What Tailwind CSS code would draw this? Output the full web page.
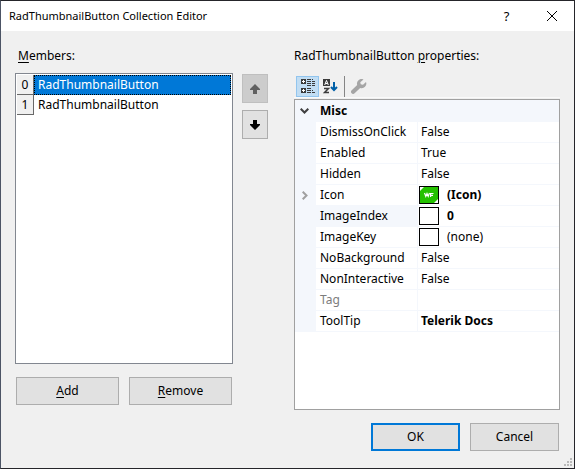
<!DOCTYPE html>
<html lang="en">
<head>
<meta charset="utf-8">
<meta name="viewport" content="width=device-width, initial-scale=1">
<title>RadThumbnailButton Collection Editor</title>
<script src="https://cdn.jsdelivr.net/npm/@tailwindcss/browser@4"></script>
</head>
<body class="bg-[#f0f0f0] text-black text-[12px] leading-4 font-['Noto_Sans','Open_Sans',sans-serif]">
<div class="relative flex flex-col min-h-screen border border-[#25252a] border-l-[#4c5465]">
  <header class="flex items-center h-[30px] bg-white pl-2">
    <h1 class="flex-1 text-[11px]">RadThumbnailButton Collection Editor</h1>
    <button type="button" aria-label="Help" class="flex items-center justify-center w-[45px] h-full text-[13px]">?</button>
    <button type="button" aria-label="Close" class="flex items-center justify-center w-[45px] h-full">
      <svg width="10" height="10" viewBox="0 0 10 10" fill="none" stroke="#000" stroke-width="1"><path d="M0 0L10 10M10 0L0 10"/></svg>
    </button>
  </header>

  <main class="flex-1 flex px-[14px] pt-[17px]">
    <section class="flex flex-col grow-[218] basis-0">
      <h2 id="members" class="pl-[3px] h-[25px]"><span class="underline underline-offset-2">M</span>embers:</h2>
      <ul role="listbox" aria-labelledby="members" class="flex-1 bg-white border border-[#828790] p-px">
        <li role="option" aria-selected="true" class="flex h-5">
          <span class="flex items-center justify-center w-[17px] h-5 bg-[#f0f0f0] border-r border-b border-[#696969]">0</span>
          <span class="flex-1 flex items-center pl-[3px] text-white bg-[#0078d7] border border-dotted border-black">RadThumbnailButton</span>
        </li>
        <li role="option" aria-selected="false" class="flex h-5">
          <span class="flex items-center justify-center w-[17px] h-5 bg-[#f0f0f0] border-r border-b border-[#696969]">1</span>
          <span class="flex-1 flex items-center pl-1">RadThumbnailButton</span>
        </li>
      </ul>
      <div class="grid grid-cols-2 gap-[10px] px-px pt-[13px] pb-[5px]">
        <button type="button" class="h-7 bg-[#e1e1e1] border border-[#adadad]"><span class="underline underline-offset-2">A</span>dd</button>
        <button type="button" class="h-7 bg-[#e1e1e1] border border-[#adadad]"><span class="underline underline-offset-2">R</span>emove</button>
      </div>
    </section>

    <div class="flex flex-col gap-[7px] w-[26px] shrink-0 ml-[9px] mr-[26px] pt-[26px]">
      <button type="button" disabled aria-label="Move up" class="flex items-center justify-center h-[29px] bg-[#cccccc] border border-[#bfbfbf]">
        <svg width="10" height="10" viewBox="0 0 10 10" fill="#606060"><path d="M5 0L10 5V6H7V10H3V6H0V5Z"/></svg>
      </button>
      <button type="button" aria-label="Move down" class="flex items-center justify-center h-[29px] bg-[#e1e1e1] border border-[#adadad]">
        <svg width="10" height="10" viewBox="0 0 10 10" fill="#000"><path d="M5 10L0 5V4H3V0H7V4H10V5Z"/></svg>
      </button>
    </div>

    <section class="flex flex-col grow-[266] basis-0">
      <h2 id="props" class="h-[27px]">RadThumbnailButton <span class="underline underline-offset-2">p</span>roperties:</h2>
      <div role="toolbar" aria-label="Property view" class="flex items-center h-[23px] pl-[2px] mb-px border-b border-[#fafafa]">
        <button type="button" aria-label="Categorized" aria-pressed="true" class="flex items-center justify-center w-[23px] h-[21px] bg-[#c1ddf3] border border-[#92c5ee]">
          <svg width="14" height="14" viewBox="0 0 14 14" shape-rendering="crispEdges">
            <path fill="#3b3b3b" d="M0 0h5v5H0zM0 9h5v5H0zM6 0h4v1H6zM11 0h1v1h-1zM6 2h4v1H6zM11 2h3v1h-3zM6 4h4v1H6zM11 4h3v1h-3zM6 6h4v1H6zM11 6h3v1h-3zM6 9h4v1H6zM6 11h4v1H6zM11 11h1v1h-1zM6 13h4v1H6zM11 13h3v1h-3z"/>
            <path fill="#fff" d="M2 1h1v1h1v1H3v1H2V3H1V2h1zM2 10h1v1h1v1H3v1H2v-1H1v-1h1z"/>
          </svg>
        </button>
        <button type="button" aria-label="Alphabetical" class="flex items-center justify-center w-[23px] h-[21px]">
          <svg width="15" height="15" viewBox="0 0 15 15">
            <path fill="#3b3b3b" d="M0 0h7v7H0z"/>
            <path fill="none" stroke="#fff" d="M1.7 6L3.5 1.4L5.3 6M2.3 4.5h2.4"/>
            <path fill="none" stroke="#3b3b3b" stroke-width="1.5" d="M1 9.5h4.5L1.5 13.5H6"/>
            <path fill="none" stroke="#0060a8" stroke-width="2" d="M11 3v8M8 8l3 3l3-3"/>
          </svg>
        </button>
        <span class="w-px h-[21px] ml-[2px] mr-[6px] bg-[#858585]"></span>
        <button type="button" disabled aria-label="Property pages" class="flex items-center justify-center w-4 h-[21px]">
          <svg width="16" height="15" viewBox="0 0 16 15" fill="#a5a5a5"><path d="M12.500 .4A4.600 4.600 0 0 0 6.200 6L.7 11.300A2 2 0 0 0 3.600 14.300L9.200 9A4.600 4.600 0 0 0 15 3L12 5.800L9.700 5.200L9.300 3.200Z"/></svg>
        </button>
      </div>

      <div class="flex-1 bg-white border border-[#a0a0a0]">
        <table aria-labelledby="props" class="w-full table-fixed border-separate border-spacing-0 text-left">
          <colgroup><col class="w-[21px]"><col class="w-[102px]"><col></colgroup>
          <tbody>
            <tr class="h-[22px] bg-[#f4f7fc]">
              <td class="p-0"><button type="button" aria-label="Collapse Misc" class="flex items-center justify-center w-[19px] h-[22px]"><svg width="9" height="6" viewBox="0 0 9 6" fill="none" stroke="#404040" stroke-width="2"><path d="M.7 .7L4.500 4.500L8.300 .7"/></svg></button></td>
              <th colspan="2" class="p-0 pl-1 font-bold">Misc</th>
            </tr>
            <tr class="h-[21px]"><td class="p-0 bg-[#f4f7fc]"></td><th class="p-0 pl-1 font-normal border-b border-r border-[#f4f7fc]">DismissOnClick</th><td class="p-0 pl-[3px] border-b border-[#f4f7fc]">False</td></tr>
            <tr class="h-[21px]"><td class="p-0 bg-[#f4f7fc]"></td><th class="p-0 pl-1 font-normal border-b border-r border-[#f4f7fc]">Enabled</th><td class="p-0 pl-[3px] border-b border-[#f4f7fc]">True</td></tr>
            <tr class="h-[21px]"><td class="p-0 bg-[#f4f7fc]"></td><th class="p-0 pl-1 font-normal border-b border-r border-[#f4f7fc]">Hidden</th><td class="p-0 pl-[3px] border-b border-[#f4f7fc]">False</td></tr>
            <tr class="h-[21px]">
              <td class="p-0 bg-[#f4f7fc]"><button type="button" aria-label="Expand Icon" class="flex items-center justify-center w-[19px] h-5"><svg width="6" height="9" viewBox="0 0 6 9" fill="none" stroke="#a0a0a0" stroke-width="2"><path d="M.7 .7L4.500 4.500L.7 8.300"/></svg></button></td>
              <th class="p-0 pl-1 font-normal border-b border-r border-[#f4f7fc]">Icon</th>
              <td class="p-0 pl-px border-b border-[#f4f7fc]"><div class="flex items-center gap-2 font-bold">
                <svg width="20" height="18" viewBox="0 0 20 18"><path fill="#000" d="M0 0h20v18H0z"/><path fill="#fff" d="M1 1h18v16H1z"/><path fill="#24c100" d="M5 1H19V13L15 17H1V5Z"/><path fill="none" stroke="#fff" stroke-width="1.200" d="M5.500 7L6.800 10.300L8 7.500L9.200 10.300L10.500 7M11.600 11V7.500H14.500M11.600 9.300H14"/></svg>(Icon)</div></td>
            </tr>
            <tr class="h-[21px]"><td class="p-0 bg-[#f4f7fc]"></td><th class="p-0 pl-1 font-normal border-b border-r border-[#f4f7fc] bg-[#f4f7fc]">ImageIndex</th><td class="p-0 pl-px border-b border-[#f4f7fc]"><div class="flex items-center gap-2 font-bold"><span class="w-5 h-[18px] border border-black"></span>0</div></td></tr>
            <tr class="h-[21px]"><td class="p-0 bg-[#f4f7fc]"></td><th class="p-0 pl-1 font-normal border-b border-r border-[#f4f7fc]">ImageKey</th><td class="p-0 pl-px border-b border-[#f4f7fc]"><div class="flex items-center gap-2"><span class="w-5 h-[18px] border border-black"></span>(none)</div></td></tr>
            <tr class="h-[21px]"><td class="p-0 bg-[#f4f7fc]"></td><th class="p-0 pl-1 font-normal border-b border-r border-[#f4f7fc]">NoBackground</th><td class="p-0 pl-[3px] border-b border-[#f4f7fc]">False</td></tr>
            <tr class="h-[21px]"><td class="p-0 bg-[#f4f7fc]"></td><th class="p-0 pl-1 font-normal border-b border-r border-[#f4f7fc]">NonInteractive</th><td class="p-0 pl-[3px] border-b border-[#f4f7fc]">False</td></tr>
            <tr class="h-[21px]"><td class="p-0 bg-[#f4f7fc]"></td><th class="p-0 pl-1 font-normal text-[#7c7c7c] border-b border-r border-[#f4f7fc]">Tag</th><td class="p-0 pl-[3px] border-b border-[#f4f7fc]"></td></tr>
            <tr class="h-[21px]"><td class="p-0 bg-[#f4f7fc]"></td><th class="p-0 pl-1 font-normal border-b border-r border-[#f4f7fc]">ToolTip</th><td class="p-0 pl-[3px] font-bold border-b border-[#f4f7fc]">Telerik Docs</td></tr>
          </tbody>
        </table>
      </div>
    </section>
  </main>

  <footer class="flex justify-end gap-[10px] px-[15px] pt-[13px] pb-[17px]">
    <button type="button" class="w-[89px] h-7 bg-[#e1e1e1] border-2 border-[#0078d7]">OK</button>
    <button type="button" class="w-[89px] h-7 bg-[#e1e1e1] border border-[#adadad]">Cancel</button>
  </footer>
  <svg class="absolute right-[2px] bottom-[2px]" width="8" height="8" viewBox="0 0 8 8" fill="#b9b9b9" shape-rendering="crispEdges"><path d="M6 0h2v2H6zM3 3h2v2H3zM6 3h2v2H6zM0 6h2v2H0zM3 6h2v2H3zM6 6h2v2H6z"/></svg>
</div>
</body>
</html>
